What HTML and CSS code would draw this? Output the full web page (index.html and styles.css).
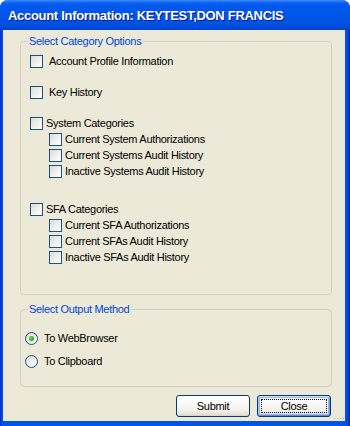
FILE: index.html
```html
<!DOCTYPE html>
<html>
<head>
<meta charset="utf-8">
<link rel="stylesheet" href="styles.css">
</head>
<body>
<div class="window">
  <div class="titlebar"><span class="title">Account Information: KEYTEST,DON FRANCIS</span></div>
  <div class="content">
    <div class="group group-cat">
      <div class="legend">Select Category Options</div>
      <div class="row r1"><span class="cb"></span><span class="lbl wide">Account Profile Information</span></div>
      <div class="row r2"><span class="cb"></span><span class="lbl wide">Key History</span></div>
      <div class="row r2"><span class="cb"></span><span class="lbl">System Categories</span></div>
      <div class="row sub first"><span class="cb"></span><span class="lbl">Current System Authorizations</span></div>
      <div class="row sub"><span class="cb"></span><span class="lbl">Current Systems Audit History</span></div>
      <div class="row sub"><span class="cb"></span><span class="lbl">Inactive Systems Audit History</span></div>
      <div class="row r3"><span class="cb"></span><span class="lbl">SFA Categories</span></div>
      <div class="row sub first"><span class="cb"></span><span class="lbl">Current SFA Authorizations</span></div>
      <div class="row sub"><span class="cb"></span><span class="lbl">Current SFAs Audit History</span></div>
      <div class="row sub"><span class="cb"></span><span class="lbl">Inactive SFAs Audit History</span></div>
    </div>
    <div class="group group-out">
      <div class="legend">Select Output Method</div>
      <div class="row radio rad1"><span class="rb checked"><span class="dot"></span></span><span class="lbl rlbl">To WebBrowser</span></div>
      <div class="row radio rad2"><span class="rb"></span><span class="lbl rlbl">To Clipboard</span></div>
    </div>
    <div class="buttons">
      <div class="btn">Submit</div>
      <div class="btn default"><span class="focus">Close</span></div>
    </div>
    <div class="grip"></div>
  </div>
</div>
</body>
</html>
```
FILE: styles.css
```css
html, body {
  margin: 0;
  padding: 0;
  background: #ffffff;
}
body {
  font-family: "Liberation Sans", Arial, sans-serif;
  font-size: 11px;
  color: #000;
}
.window {
  width: 350px;
  height: 426px;
  box-sizing: border-box;
  background: linear-gradient(to right, #0019CF 0, #0843E0 1px, #0055E5 3px, #0055E5 345px, #0843E0 348px, #001EA0 350px);
  border-radius: 8px 8px 0 0;
  display: flex;
  flex-direction: column;
  overflow: hidden;
}
.titlebar {
  height: 30px;
  flex: none;
  background: linear-gradient(#3C8CFF 0, #2E7EFA 1px, #0A60EE 3px, #0058EE 6px, #0056E8 16px, #0052E0 24px, #0048D8 28px, #003FD0 30px);
  display: flex;
  align-items: center;
  padding-left: 8px;
  box-sizing: border-box;
}
.title {
  color: #fff;
  font-weight: bold;
  font-size: 13px;
  letter-spacing: -0.3px;
  text-shadow: 1px 1px 0 #0A1883;
  margin-top: 1px;
}
.content {
  flex: 1;
  margin: 0 5px 5px 3px;
  background: #ECE9D8;
  display: flex;
  flex-direction: column;
  position: relative;
}
.group {
  margin-left: 17px;
  width: 312px;
  box-sizing: border-box;
  border: 1px solid #D0D0BF;
  border-radius: 4px;
  display: flex;
  flex-direction: column;
}
.group-cat {
  margin-top: 11px;
  height: 254px;
  padding-left: 9px;
}
.group-out {
  margin-top: 14px;
  height: 78px;
  padding-left: 4px;
}
.legend {
  margin-top: -7px;
  margin-left: -2px;
  padding: 0 2px 0 1px;
  background: #ECE9D8;
  align-self: flex-start;
  color: #0046D5;
  line-height: 13px;
  letter-spacing: -0.3px;
}
.group-out .legend {
  margin-left: 3px;
}
.row {
  display: flex;
  align-items: center;
  height: 13px;
  line-height: 13px;
}
.r1 { margin-top: 7px; }
.r2 { margin-top: 18px; }
.r3 { margin-top: 25px; }
.sub { margin-top: 3px; padding-left: 19px; }
.sub.first { margin-top: 3px; }
.cb {
  width: 13px;
  height: 13px;
  box-sizing: border-box;
  border: 1px solid #1C5180;
  background: linear-gradient(135deg, #DCDCD7 0%, #F2F2EE 60%, #FFFFFF 100%);
  flex: none;
}
.lbl {
  margin-left: 3px;
  letter-spacing: -0.3px;
  white-space: nowrap;
}
.lbl.wide { margin-left: 6px; }
.rad1 { margin-top: 16px; }
.rad2 { margin-top: 10px; }
.rb {
  width: 13px;
  height: 13px;
  box-sizing: border-box;
  border: 1px solid #1C5180;
  border-radius: 50%;
  background: linear-gradient(135deg, #DCDCD7 0%, #F2F2EE 60%, #FFFFFF 100%);
  flex: none;
  display: flex;
  align-items: center;
  justify-content: center;
}
.dot {
  width: 5px;
  height: 5px;
  border-radius: 50%;
  background: radial-gradient(circle at 40% 40%, #6CE36A 0, #2FB32C 50%, #1A8E18 100%);
}
.rlbl { margin-left: 6px; }
.buttons {
  margin-top: 8px;
  display: flex;
  justify-content: flex-end;
  gap: 7px;
  padding-right: 14px;
}
.btn {
  width: 74px;
  height: 22px;
  box-sizing: border-box;
  border: 1px solid #003C74;
  border-radius: 3px;
  background: linear-gradient(#FFFFFF 0, #FCFCFB 30%, #F1F0EA 75%, #E3E0D5 92%, #D6D0C5 100%);
  display: flex;
  align-items: center;
  justify-content: center;
  letter-spacing: -0.3px;
}
.btn.default {
  box-shadow: inset 0 1px 0 #CEE7FF, inset 1px 0 0 #A6C6F4, inset -1px 0 0 #6E94E6, inset 0 -1px 0 #6982EE, inset 0 0 0 2px #98B8EC;
}
.focus {
  width: 66px;
  height: 14px;
  box-sizing: border-box;
  border: 1px dotted #000;
  display: flex;
  align-items: center;
  justify-content: center;
}
.grip {
  position: absolute;
  right: 1px;
  bottom: 1px;
  width: 11px;
  height: 3px;
  background: radial-gradient(circle, #B7B4A5 0.8px, transparent 1px) 0 0 / 3px 3px;
}
```
